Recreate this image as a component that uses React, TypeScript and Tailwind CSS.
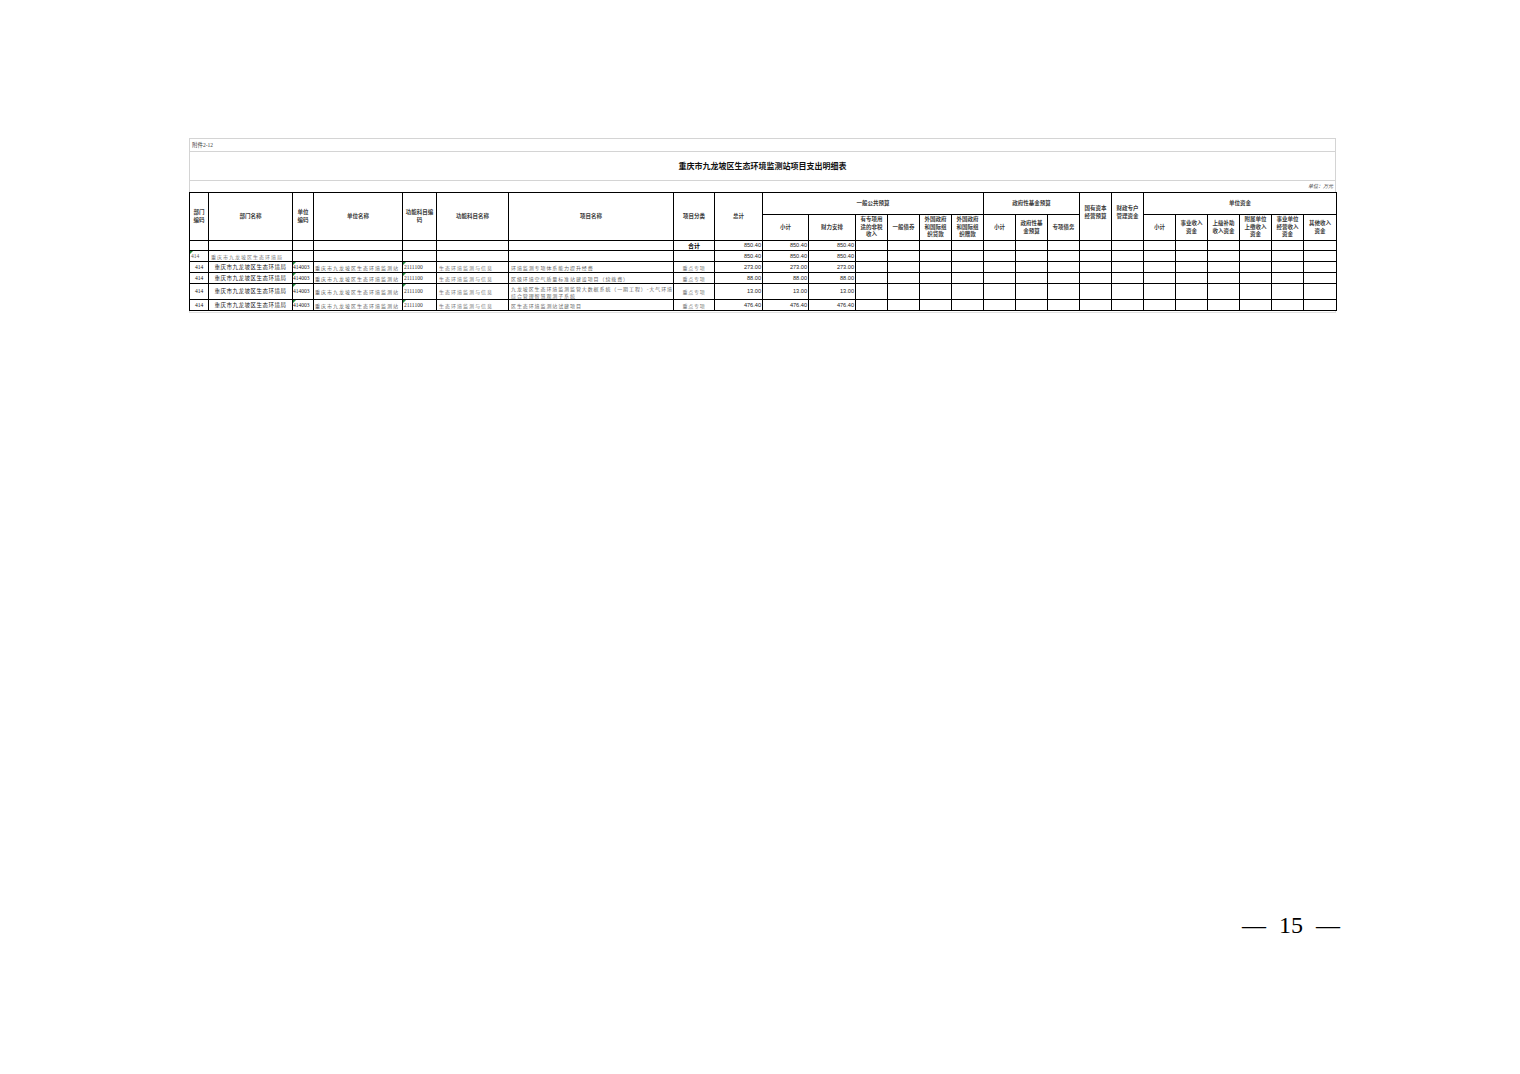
import React from 'react';

const SANS = "font-['Noto_Sans_CJK_SC',sans-serif]";
const SERIF = "font-['Liberation_Serif','Noto_Sans_CJK_SC',serif]";
const NUM = "font-['Liberation_Sans',sans-serif]";

const colWidths = [19, 84, 21, 89, 34, 72, 165, 41, 48, 46, 47, 32, 32, 32, 32, 32, 32, 32, 32, 32, 32, 32, 32, 32, 32, 33];

interface Row {
    h: string;
    deptCode: string;
    deptName: string;
    unitCode: string;
    unitName: string;
    funcCode: string;
    funcName: string;
    project: string;
    kind: string;
    amount: string;
    sub?: boolean;
    total?: boolean;
}

const rows: Row[] = [
    { h: 'h-[10px]', deptCode: '', deptName: '', unitCode: '', unitName: '', funcCode: '', funcName: '', project: '', kind: '合计', amount: '850.40', total: true },
    { h: 'h-[11px]', deptCode: '414', deptName: '重庆市九龙坡区生态环境局', unitCode: '', unitName: '', funcCode: '', funcName: '', project: '', kind: '', amount: '850.40', sub: true },
    { h: 'h-[11px]', deptCode: '414', deptName: '重庆市九龙坡区生态环境局', unitCode: '414003', unitName: '重庆市九龙坡区生态环境监测站', funcCode: '2111100', funcName: '生态环境监测与信息', project: '环境监测专项体系能力提升经费', kind: '重点专项', amount: '273.00' },
    { h: 'h-[11px]', deptCode: '414', deptName: '重庆市九龙坡区生态环境局', unitCode: '414003', unitName: '重庆市九龙坡区生态环境监测站', funcCode: '2111100', funcName: '生态环境监测与信息', project: '区级环境空气质量标准站建设项目（续拨费）', kind: '重点专项', amount: '88.00' },
    { h: 'h-[16px]', deptCode: '414', deptName: '重庆市九龙坡区生态环境局', unitCode: '414003', unitName: '重庆市九龙坡区生态环境监测站', funcCode: '2111100', funcName: '生态环境监测与信息', project: '九龙坡区生态环境监测监管大数据系统（一期工程）-大气环境综合管理智慧观测子系统', kind: '重点专项', amount: '13.00' },
    { h: 'h-[11px]', deptCode: '414', deptName: '重庆市九龙坡区生态环境局', unitCode: '414003', unitName: '重庆市九龙坡区生态环境监测站', funcCode: '2111100', funcName: '生态环境监测与信息', project: '区生态环境监测站试建项目', kind: '重点专项', amount: '476.40' },
];

const Flag = () => (
    <span className="absolute left-0 top-0 w-0 h-0 border-t-[3px] border-r-[3px] border-t-[#1f8a3a] border-r-transparent" />
);

const th = `border border-black text-center align-middle font-bold text-[#3a3a3a] text-[5.5px] leading-[7.5px] ${SANS}`;
const td = 'border border-black p-0 align-middle';

const App: React.FC = () => {
    return (
        <div className="w-[1520px] h-[1074px] bg-white overflow-hidden">
            <div className="pt-[138px] pl-[189px]">
                <div className="w-[1147px]">
                    {/* sheet rows above the table */}
                    <div className={`h-[14px] border border-[#d4d4d4] flex items-center pl-[2px] text-[5.5px] text-[#444] ${SERIF}`}>
                        附件2-12
                    </div>
                    <div className={`h-[29px] border-x border-b border-[#d4d4d4] flex items-center justify-center text-[8px] font-bold text-[#111] ${SANS}`}>
                        重庆市九龙坡区生态环境监测站项目支出明细表
                    </div>
                    <div className={`h-[11px] border-x border-[#d4d4d4] flex items-center justify-end pr-[2px] text-[5px] italic text-[#444] ${SERIF}`}>
                        单位：万元
                    </div>

                    <table className="w-[1147px] table-fixed border-collapse border border-black">
                        <colgroup>
                            {colWidths.map((w, i) => (
                                <col key={i} style={{ width: w }} />
                            ))}
                        </colgroup>
                        <thead>
                            <tr className="h-[22px]">
                                <th rowSpan={2} className={th}>部门<br />编码</th>
                                <th rowSpan={2} className={th}>部门名称</th>
                                <th rowSpan={2} className={th}>单位<br />编码</th>
                                <th rowSpan={2} className={th}>单位名称</th>
                                <th rowSpan={2} className={th}>功能科目编<br />码</th>
                                <th rowSpan={2} className={th}>功能科目名称</th>
                                <th rowSpan={2} className={th}>项目名称</th>
                                <th rowSpan={2} className={th}>项目分类</th>
                                <th rowSpan={2} className={th}>总计</th>
                                <th colSpan={6} className={th}>一般公共预算</th>
                                <th colSpan={3} className={th}>政府性基金预算</th>
                                <th rowSpan={2} className={`${th} pb-[8px]`}>国有资本<br />经营预算</th>
                                <th rowSpan={2} className={`${th} pb-[8px]`}>财政专户<br />管理资金</th>
                                <th colSpan={6} className={th}>单位资金</th>
                            </tr>
                            <tr className="h-[26px]">
                                <th className={th}>小计</th>
                                <th className={th}>财力安排</th>
                                <th className={th}>有专项用<br />途的非税<br />收入</th>
                                <th className={th}>一般债券</th>
                                <th className={th}>外国政府<br />和国际组<br />织贷款</th>
                                <th className={th}>外国政府<br />和国际组<br />织赠款</th>
                                <th className={th}>小计</th>
                                <th className={th}>政府性基<br />金预算</th>
                                <th className={th}>专项债务</th>
                                <th className={th}>小计</th>
                                <th className={th}>事业收入<br />资金</th>
                                <th className={th}>上级补助<br />收入资金</th>
                                <th className={th}>附属单位<br />上缴收入<br />资金</th>
                                <th className={th}>事业单位<br />经营收入<br />资金</th>
                                <th className={th}>其他收入<br />资金</th>
                            </tr>
                        </thead>
                        <tbody>
                            {rows.map((r, i) => (
                                <tr key={i} className={r.h}>
                                    <td className={`${td} relative`}>
                                        {r.sub && <Flag />}
                                        <div className={`${SERIF} text-[5.5px] leading-[7px] ${r.sub ? 'text-left pl-[1px] text-[#555]' : 'text-center text-[#111]'}`}>{r.deptCode}</div>
                                    </td>
                                    <td className={td}>
                                        <div className={`${SANS} whitespace-nowrap overflow-hidden leading-[7px] ${r.sub ? 'text-left pl-[2px] text-[5px] tracking-[1px] text-[#777]' : 'text-center text-[5.5px] tracking-[0.5px] text-[#222]'}`}>{r.deptName}</div>
                                    </td>
                                    <td className={`${td} relative`}>
                                        {r.unitCode && <Flag />}
                                        <div className={`${SERIF} text-[5.5px] leading-[7px] text-[#222] whitespace-nowrap overflow-visible`}>{r.unitCode}</div>
                                    </td>
                                    <td className={td}>
                                        <div className={`${SANS} text-[5px] tracking-[1px] leading-[7px] text-[#666] whitespace-nowrap overflow-hidden pl-[1px]`}>{r.unitName}</div>
                                    </td>
                                    <td className={`${td} relative`}>
                                        {r.funcCode && <Flag />}
                                        <div className={`${SERIF} text-[5.5px] leading-[7px] text-[#333] pl-[1px]`}>{r.funcCode}</div>
                                    </td>
                                    <td className={td}>
                                        <div className={`${SANS} text-[5px] tracking-[1px] leading-[7px] text-[#777] whitespace-nowrap overflow-hidden pl-[2px]`}>{r.funcName}</div>
                                    </td>
                                    <td className={td}>
                                        <div className={`${SANS} text-[5px] tracking-[0.9px] leading-[7px] text-[#666] pl-[2px] ${r.h === 'h-[16px]' ? '' : 'whitespace-nowrap overflow-hidden'}`}>{r.project}</div>
                                    </td>
                                    <td className={td}>
                                        {r.total ? (
                                            <div className={`${SANS} text-[6px] font-bold leading-[7px] text-black text-center`}>合计</div>
                                        ) : (
                                            <div className={`${SANS} text-[5px] tracking-[0.8px] leading-[7px] text-[#777] text-center`}>{r.kind}</div>
                                        )}
                                    </td>
                                    {[0, 1, 2].map(k => (
                                        <td key={k} className={td}>
                                            <div className={`${NUM} text-[5.6px] leading-[7px] text-[#222] text-right pr-[1px]`}>{r.amount}</div>
                                        </td>
                                    ))}
                                    {Array.from({ length: 15 }).map((_, k) => (
                                        <td key={`e${k}`} className={td}></td>
                                    ))}
                                </tr>
                            ))}
                        </tbody>
                    </table>
                    <div className="h-[2px] border-x border-b border-[#e0e0e0]" />
                </div>
            </div>

            {/* page number */}
            <div className={`mt-[598px] flex justify-end pr-[180px] items-center gap-[13px] text-[24px] leading-[28px] text-black ${SERIF}`}>
                <span>—</span>
                <span>15</span>
                <span>—</span>
            </div>
        </div>
    );
};

export default App;
